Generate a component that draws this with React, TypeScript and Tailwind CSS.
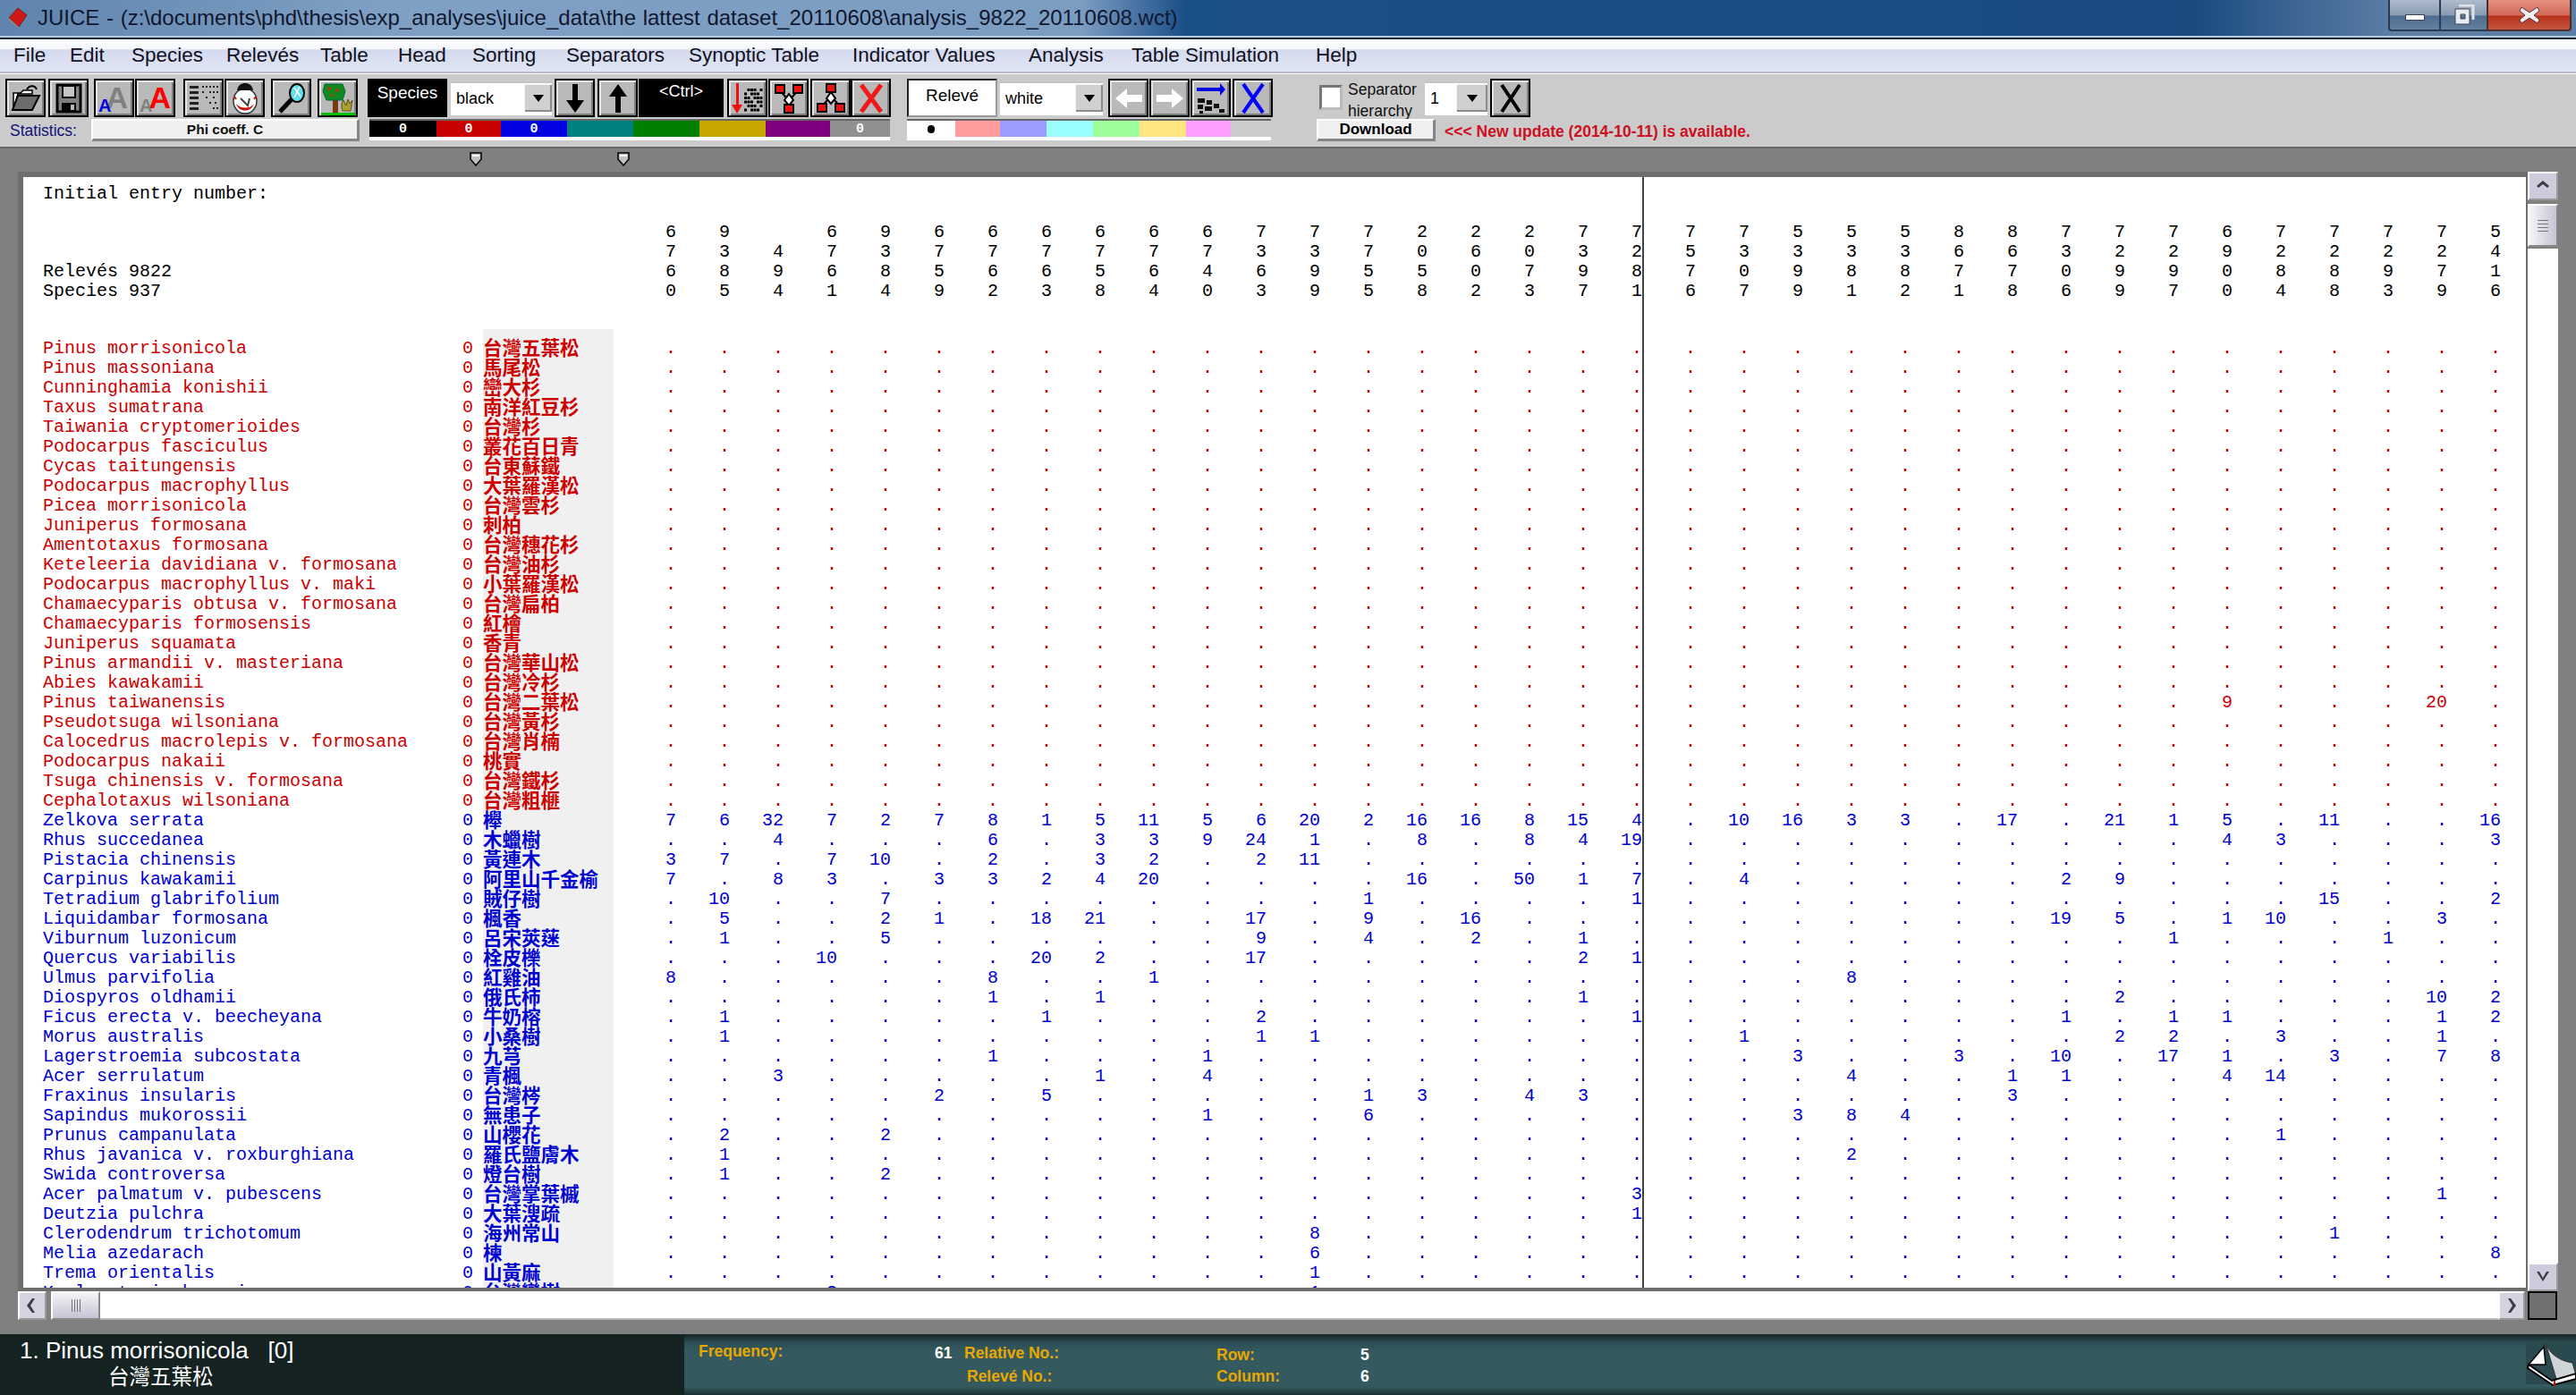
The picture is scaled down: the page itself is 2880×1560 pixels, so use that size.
const menus = [
  { label: "File", w: "w-[63px]" },
  { label: "Edit", w: "w-[69px]" },
  { label: "Species", w: "w-[106px]" },
  { label: "Relevés", w: "w-[105px]" },
  { label: "Table", w: "w-[87px]" },
  { label: "Head", w: "w-[83px]" },
  { label: "Sorting", w: "w-[105px]" },
  { label: "Separators", w: "w-[137px]" },
  { label: "Synoptic Table", w: "w-[183px]" },
  { label: "Indicator Values", w: "w-[197px]" },
  { label: "Analysis", w: "w-[115px]" },
  { label: "Table Simulation", w: "w-[206px]" },
  { label: "Help", w: "w-[60px]" },
];

const strip1 = [
  { w: "w-[75px]", bg: "bg-[#000000]", text: "0" },
  { w: "w-[72px]", bg: "bg-[#c80000]", text: "0" },
  { w: "w-[74px]", bg: "bg-[#0000e0]", text: "0" },
  { w: "w-[74px]", bg: "bg-[#008080]", text: "" },
  { w: "w-[74px]", bg: "bg-[#008000]", text: "" },
  { w: "w-[74px]", bg: "bg-[#c8a800]", text: "" },
  { w: "w-[72px]", bg: "bg-[#800080]", text: "" },
  { w: "w-[67px]", bg: "bg-[#909090]", text: "0" },
];

const strip2 = [
  { w: "w-[54px]", bg: "bg-[#ffffff]" },
  { w: "w-[50px]", bg: "bg-[#ff9c9c]" },
  { w: "w-[52px]", bg: "bg-[#9c9cff]" },
  { w: "w-[52px]", bg: "bg-[#9cffff]" },
  { w: "w-[52px]", bg: "bg-[#9cff9c]" },
  { w: "w-[52px]", bg: "bg-[#ffe680]" },
  { w: "w-[50px]", bg: "bg-[#ff9cff]" },
  { w: "w-[45px]", bg: "bg-[#cccccc]" },
];

const head = [
  "6 9 _ 6 9 6 6 6 6 6 6 7 7 7 2 2 2 7 7 7 7 5 5 5 8 8 7 7 7 6 7 7 7 7 5",
  "7 3 4 7 3 7 7 7 7 7 7 3 3 7 0 6 0 3 2 5 3 3 3 3 6 6 3 2 2 9 2 2 2 2 4",
  "6 8 9 6 8 5 6 6 5 6 4 6 9 5 5 0 7 9 8 7 0 9 8 8 7 7 0 9 9 0 8 8 9 7 1",
  "0 5 4 1 4 9 2 3 8 4 0 3 9 5 8 2 3 7 1 6 7 9 1 2 1 8 6 9 7 0 4 8 3 9 6",
];
const headLabels = ["", "", "Relevés 9822", "Species 937"];

// sparse rows: column index -> value, everything else is a dot
function sparse(vals: Record<number, string> = {}) {
  return Array.from({ length: 35 }, (_, i) => vals[i] ?? ".");
}
function dense(s: string) {
  return s.replace("|", "").trim().split(/\s+/);
}

const redRows: [string, string, string[]][] = [
  ["Pinus morrisonicola", "台灣五葉松", sparse()],
  ["Pinus massoniana", "馬尾松", sparse()],
  ["Cunninghamia konishii", "巒大杉", sparse()],
  ["Taxus sumatrana", "南洋紅豆杉", sparse()],
  ["Taiwania cryptomerioides", "台灣杉", sparse()],
  ["Podocarpus fasciculus", "叢花百日青", sparse()],
  ["Cycas taitungensis", "台東蘇鐵", sparse()],
  ["Podocarpus macrophyllus", "大葉羅漢松", sparse()],
  ["Picea morrisonicola", "台灣雲杉", sparse()],
  ["Juniperus formosana", "刺柏", sparse()],
  ["Amentotaxus formosana", "台灣穗花杉", sparse()],
  ["Keteleeria davidiana v. formosana", "台灣油杉", sparse()],
  ["Podocarpus macrophyllus v. maki", "小葉羅漢松", sparse()],
  ["Chamaecyparis obtusa v. formosana", "台灣扁柏", sparse()],
  ["Chamaecyparis formosensis", "紅檜", sparse()],
  ["Juniperus squamata", "香青", sparse()],
  ["Pinus armandii v. masteriana", "台灣華山松", sparse()],
  ["Abies kawakamii", "台灣冷杉", sparse()],
  ["Pinus taiwanensis", "台灣二葉松", sparse({ 29: "9", 33: "20" })],
  ["Pseudotsuga wilsoniana", "台灣黃杉", sparse()],
  ["Calocedrus macrolepis v. formosana", "台灣肖楠", sparse()],
  ["Podocarpus nakaii", "桃實", sparse()],
  ["Tsuga chinensis v. formosana", "台灣鐵杉", sparse()],
  ["Cephalotaxus wilsoniana", "台灣粗榧", sparse()],
];

const blueRows: [string, string, string[]][] = [
  ["Zelkova serrata", "櫸", dense("7 6 32 7 2 7 8 1 5 11 5 6 20 2 16 16 8 15 | 4 . 10 16 3 3 . 17 . 21 1 5 . 11 . . 16")],
  ["Rhus succedanea", "木蠟樹", dense(". . 4 . . . 6 . 3 3 9 24 1 . 8 . 8 4 | 19 . . . . . . . . . . 4 3 . . . 3")],
  ["Pistacia chinensis", "黃連木", sparse({ 0: "3", 1: "7", 3: "7", 4: "10", 6: "2", 8: "3", 9: "2", 11: "2", 12: "11" })],
  ["Carpinus kawakamii", "阿里山千金榆", dense("7 . 8 3 . 3 3 2 4 20 . . . . 16 . 50 1 | 7 . 4 . . . . . 2 9 . . . . . . .")],
  ["Tetradium glabrifolium", "賊仔樹", dense(". 10 . . 7 . . . . . . . . 1 . . . . | 1 . . . . . . . . . . . . 15 . . 2")],
  ["Liquidambar formosana", "楓香", dense(". 5 . . 2 1 . 18 21 . . 17 . 9 . 16 . . | . . . . . . . . 19 5 . 1 10 . . 3 .")],
  ["Viburnum luzonicum", "呂宋莢蒾", dense(". 1 . . 5 . . . . . . 9 . 4 . 2 . 1 | . . . . . . . . . . 1 . . . 1 . .")],
  ["Quercus variabilis", "栓皮櫟", sparse({ 3: "10", 7: "20", 8: "2", 11: "17", 17: "2", 18: "1" })],
  ["Ulmus parvifolia", "紅雞油", sparse({ 0: "8", 6: "8", 9: "1", 22: "8" })],
  ["Diospyros oldhamii", "俄氏柿", sparse({ 6: "1", 8: "1", 17: "1", 27: "2", 33: "10", 34: "2" })],
  ["Ficus erecta v. beecheyana", "牛奶榕", sparse({ 1: "1", 7: "1", 11: "2", 18: "1", 26: "1", 28: "1", 29: "1", 33: "1", 34: "2" })],
  ["Morus australis", "小桑樹", sparse({ 1: "1", 11: "1", 12: "1", 20: "1", 27: "2", 28: "2", 30: "3", 33: "1" })],
  ["Lagerstroemia subcostata", "九芎", sparse({ 6: "1", 10: "1", 21: "3", 24: "3", 26: "10", 28: "17", 29: "1", 31: "3", 33: "7", 34: "8" })],
  ["Acer serrulatum", "青楓", sparse({ 2: "3", 8: "1", 10: "4", 22: "4", 25: "1", 26: "1", 29: "4", 30: "14" })],
  ["Fraxinus insularis", "台灣梣", sparse({ 5: "2", 7: "5", 13: "1", 14: "3", 16: "4", 17: "3", 25: "3" })],
  ["Sapindus mukorossii", "無患子", sparse({ 10: "1", 13: "6", 21: "3", 22: "8", 23: "4" })],
  ["Prunus campanulata", "山櫻花", sparse({ 1: "2", 4: "2", 30: "1" })],
  ["Rhus javanica v. roxburghiana", "羅氏鹽膚木", sparse({ 1: "1", 22: "2" })],
  ["Swida controversa", "燈台樹", sparse({ 1: "1", 4: "2" })],
  ["Acer palmatum v. pubescens", "台灣掌葉槭", sparse({ 18: "3", 33: "1" })],
  ["Deutzia pulchra", "大葉溲疏", sparse({ 18: "1" })],
  ["Clerodendrum trichotomum", "海州常山", sparse({ 12: "8", 31: "1" })],
  ["Melia azedarach", "楝", sparse({ 12: "6", 34: "8" })],
  ["Trema orientalis", "山黃麻", sparse({ 12: "1" })],
  ["Koelreuteria henryi", "台灣欒樹", sparse({ 3: "3", 12: "1" })],
];

function Btn({ className = "", children }: { className?: string; children?: React.ReactNode }) {
  return (
    <div className={`w-[45px] h-[43px] shrink-0 flex items-center justify-center border-2 border-black bg-[#b9b9b9] shadow-[inset_2px_2px_0_#e4e4e4,inset_-2px_-2px_0_#7c7c7c] ${className}`}>
      {children}
    </div>
  );
}

function Select({ className = "", value, btn = "w-[31px]" }: { className?: string; value: string; btn?: string }) {
  return (
    <div className={`h-[43px] shrink-0 flex flex-col ${className}`}>
      <div className="h-[35px] mt-[3px] flex items-stretch bg-white border-t-[2px] border-[#c4c4c4]">
        <div className="flex-1 pl-[6px] text-[18px] leading-[34px] text-black">{value}</div>
        <div className={`${btn} my-[1px] flex items-center justify-center bg-[#d0d0d0] shadow-[inset_1px_1px_0_#f4f4f4,inset_-2px_-2px_0_#8c8c8c]`}>
          <svg width="12" height="8" viewBox="0 0 12 8"><path d="M0 0h12L6 8z" fill="#000" /></svg>
        </div>
      </div>
      <div className="h-[3px] bg-white" />
    </div>
  );
}

function Row({ name, cjk, cells, color }: { name: string; cjk: string; cells: string[]; color: string }) {
  return (
    <div className={`flex h-[22px] leading-[22px] ${color}`}>
      <div className="w-[491px] shrink-0 pl-[22px] whitespace-pre">{name}</div>
      <div className="w-[23px] shrink-0">0</div>
      <div className="w-[146px] shrink-0 bg-[#f0f0f0] font-['Liberation_Sans','Noto_Sans_CJK_TC',sans-serif] font-bold text-[21.5px] leading-[22px] whitespace-nowrap overflow-visible">{cjk}</div>
      <div className="ml-[10px] grid grid-cols-[repeat(35,60px)]">
        {cells.map((c, i) => (
          <div key={i} className="text-right">{c}</div>
        ))}
      </div>
    </div>
  );
}

function HeadRow({ label, cells }: { label: string; cells: string[] }) {
  return (
    <div className="flex h-[22px] leading-[22px] text-black">
      <div className="w-[670px] shrink-0 pl-[22px]">{label}</div>
      <div className="grid grid-cols-[repeat(35,60px)]">
        {cells.map((c, i) => (
          <div key={i} className="text-right">{c === "_" ? "" : c}</div>
        ))}
      </div>
    </div>
  );
}

function Marker({ className = "" }: { className?: string }) {
  return (
    <svg className={className} width="14" height="16" viewBox="0 0 14 16">
      <path d="M1 1h12v7l-6 7-6-7z" fill="#c0c0c0" stroke="#000" strokeWidth="1.5" />
      <path d="M3 3h8v2H3z" fill="#fff" />
    </svg>
  );
}

function Chevron({ dir }: { dir: "up" | "down" | "left" | "right" }) {
  const d = {
    up: "M2 9 9 3l7 6-2 2-5-4-5 4z",
    down: "M2 3h3l4 7 4-7h3L9 14z",
    left: "M9 1 3 9l6 8h3L7 9l5-8z",
    right: "M5 1h3l6 8-6 8H5l5-8z",
  }[dir];
  return (
    <svg width="18" height="18" viewBox="0 0 18 18"><path d={d} fill="#3c3c46" /></svg>
  );
}

function DotPattern() {
  const dots = [];
  for (let y = 0; y < 6; y++) for (let x = 0; x < 6; x++) if ((x * 3 + y * 5) % 4 !== 0) dots.push(<rect key={`${x}-${y}`} x={14 + x * 3.5} y={6 + y * 4.5} width="3" height="3" fill="#000" />);
  return <>{dots}</>;
}

export default function App() {
  return (
    <div className="w-[2880px] h-[1560px] flex flex-col overflow-hidden bg-[#808080] font-['Liberation_Sans','Noto_Sans_CJK_TC',sans-serif]">
      {/* title bar */}
      <div className="h-[40px] shrink-0 flex items-center bg-[linear-gradient(90deg,#5f84ad_0%,#7fa0c4_15%,#7c9dc2_42%,#1b4f88_46%,#1a4a80_85%,#5c7fa5_93%)]">
        <svg className="ml-[8px] shrink-0" width="24" height="24" viewBox="0 0 24 24">
          <path d="M2 12 12 1l10 8-9 13z" fill="#d01818" stroke="#6a2020" strokeWidth="1" />
          <path d="M2 12l11 10v2L2 15z" fill="#888" />
        </svg>
        <div className="ml-[10px] w-[1250px] shrink-0 text-[24px] leading-[40px] text-[#10172e] whitespace-nowrap [word-spacing:1px]">
          JUICE - (z:\documents\phd\thesis\exp_analyses\juice_data\the lattest dataset_20110608\analysis_9822_20110608.wct)
        </div>
        <div className="ml-auto mr-[5px] self-start flex h-[35px]">
          <div className="w-[57px] flex items-center justify-center border-l-2 border-b-2 border-[#2a3c55] rounded-bl-[4px] bg-[linear-gradient(180deg,#aebccd_0%,#8a9bb2_50%,#4f6d90_55%,#64809f_100%)]">
            <div className="w-[22px] h-[7px] mt-[6px] bg-white border border-[#445]" />
          </div>
          <div className="w-[53px] flex items-center justify-center border-l-2 border-b-2 border-[#2a3c55] bg-[linear-gradient(180deg,#aebccd_0%,#8a9bb2_50%,#4f6d90_55%,#64809f_100%)]">
            <svg width="24" height="24" viewBox="0 0 24 24" fill="none">
              <path d="M6 1h16v16" stroke="#dfe4ea" strokeWidth="3" />
              <path d="M2 5h16v17H2zM8 11h5v5H8z" fill="#e8ecf0" fillRule="evenodd" stroke="#445" strokeWidth="1" />
            </svg>
          </div>
          <div className="w-[95px] flex items-center justify-center border-l-2 border-r-2 border-b-2 border-[#4a3030] rounded-br-[4px] bg-[linear-gradient(180deg,#e5907e_0%,#d46a58_50%,#b8321a_55%,#c4573f_100%)]">
            <svg width="24" height="22" viewBox="0 0 24 22">
              <path d="M3 2l9 6 9-6 2 4-6 5 6 5-2 4-9-6-9 6-2-4 6-5-6-5z" fill="#f0f0f0" stroke="#534" strokeWidth="1" />
            </svg>
          </div>
        </div>
      </div>
      <div className="h-[2px] bg-[#b6c8da]" />
      <div className="h-[2px] bg-[#16293f]" />

      {/* menu bar */}
      <div className="h-[36px] shrink-0 flex items-center pl-[15px] text-[22.5px] text-[#111122] bg-[linear-gradient(180deg,#ffffff_0%,#f4f6fc_30%,#d4daee_33%,#e2e6f4_100%)]">
        {menus.map((m) => (
          <div key={m.label} className={`${m.w} shrink-0 whitespace-nowrap`}>{m.label}</div>
        ))}
      </div>
      <div className="h-[3px] bg-[#bcbccf] border-b border-white" />

      {/* toolbar */}
      <div className="h-[81px] shrink-0 bg-[#cbcbcb] pt-[5px]">
        <div className="flex h-[43px]">
          <Btn className="ml-[6px]">
            <svg width="34" height="32" viewBox="0 0 34 32">
              <path d="M3 10h8l3-3h10v4H8L3 28z" fill="#fff" stroke="#000" strokeWidth="1.5" />
              <path d="M8 13h24l-8 16H2z" fill="#6c6c6c" stroke="#000" strokeWidth="2" />
              <path d="M18 6c3-5 9-5 11 0" fill="none" stroke="#000" strokeWidth="2" />
            </svg>
          </Btn>
          <Btn className="ml-[3px]">
            <svg width="30" height="34" viewBox="0 0 30 34">
              <path d="M2 2h26v30H2z" fill="#808080" stroke="#000" strokeWidth="3" />
              <path d="M8 3h14v13H8z" fill="#c4c4c4" stroke="#000" strokeWidth="2" />
              <path d="M7 22h16v10H7z" fill="#000" />
              <path d="M17 24h4v6h-4z" fill="#bbb" />
            </svg>
          </Btn>
          <Btn className="ml-[6px] relative overflow-hidden">
            <span className="absolute right-[5px] top-[0px] text-[34px] font-bold leading-[38px] text-[#808080]">A</span>
            <span className="absolute left-[3px] bottom-[0px] text-[20px] font-bold leading-[22px] text-[#0000e0]">A</span>
          </Btn>
          <Btn className="ml-[1px] relative overflow-hidden">
            <span className="absolute right-[3px] top-[0px] text-[34px] font-bold leading-[38px] text-[#ff0000]">A</span>
            <span className="absolute left-[3px] bottom-[0px] text-[20px] font-bold leading-[22px] text-[#808080]">A</span>
          </Btn>
          <Btn className="ml-[9px]">
            <svg width="36" height="32" viewBox="0 0 36 32" fill="#222">
              <path d="M2 2h10v3H2zM2 8h10v3H2zM2 14h10v3H2zM2 20h10v3H2zM2 26h10v3H2z" />
              <path d="M16 2h2v2h-2zM20 2h2v2h-2zM24 2h2v2h-2zM28 2h2v2h-2zM32 2h2v2h-2zM16 8h2v2h-2zM24 8h2v2h-2zM28 8h2v2h-2zM32 8h2v2h-2zM20 14h2v2h-2zM28 14h2v2h-2zM24 20h2v2h-2zM30 20h2v2h-2zM28 26h2v2h-2zM32 26h2v2h-2z" />
            </svg>
          </Btn>
          <Btn className="ml-[1px]">
            <svg width="30" height="36" viewBox="0 0 30 36">
              <ellipse cx="15" cy="21" rx="13" ry="14" fill="#fff" stroke="#333" strokeWidth="1.5" />
              <path d="M6 9c1-6 5-8 9-8s8 2 9 8z" fill="#111" />
              <path d="M10 18l8 8 2-8" fill="none" stroke="#444" strokeWidth="2" />
              <path d="M5 24c3 10 17 10 20 0-4 6-15 6-20 0z" fill="#d01010" />
              <path d="M3 16l2 3M27 16l-2 3" stroke="#d01010" strokeWidth="2" />
            </svg>
          </Btn>
          <Btn className="ml-[7px]">
            <svg width="34" height="36" viewBox="0 0 34 36">
              <path d="M4 33l13-14" stroke="#000" strokeWidth="5" />
              <ellipse cx="23" cy="12" rx="8" ry="10" fill="#5fe0ee" stroke="#000" strokeWidth="2" />
              <path d="M20 6l7 10M26 5l-6 12" stroke="#fff" strokeWidth="1.5" />
            </svg>
          </Btn>
          <Btn className="ml-[7px]">
            <svg width="38" height="38" viewBox="0 0 38 38">
              <path d="M0 35h38v3H0z" fill="#00c000" />
              <path d="M13 14h6v21h-6z" fill="#7a3a10" />
              <path d="M4 3h20l3 8-3 10H6L2 11z" fill="#0f8a1e" stroke="#064" strokeWidth="1" />
              <path d="M7 6h4v4H7zM16 8h4v4h-4zM10 14h4v3h-4z" fill="#8a4a1a" />
              <path d="M24 33c-2-5-1-10 1-12l3 6 2-7 2 5 3-4-2 12z" fill="#a8a030" stroke="#5a5010" strokeWidth="1" />
            </svg>
          </Btn>

          <div className="ml-[11px] w-[89px] h-[43px] shrink-0 bg-black text-center text-white text-[19px] leading-[32px]">Species</div>
          <Select className="ml-[4px] w-[113px]" value="black" />
          <Btn className="ml-[3px]">
            <svg width="22" height="34" viewBox="0 0 22 34"><path d="M8 1h6v18h7L11 33 1 19h7z" fill="#000" /></svg>
          </Btn>
          <Btn className="ml-[3px]">
            <svg width="22" height="34" viewBox="0 0 22 34"><path d="M8 33h6V15h7L11 1 1 15h7z" fill="#000" /></svg>
          </Btn>
          <div className="ml-[1px] w-[95px] h-[43px] shrink-0 bg-black text-center text-white text-[18px] leading-[28px]">&lt;Ctrl&gt;</div>
          <Btn className="ml-[4px]">
            <svg width="36" height="34" viewBox="0 0 36 34">
              <path d="M5 0h3v24h4L6 34 0 24h5z" fill="#f01010" />
              <DotPattern />
            </svg>
          </Btn>
          <Btn className="ml-[1px]">
            <svg width="36" height="34" viewBox="0 0 36 34">
              <path d="M8 8l10 12L28 8M18 20v8" fill="none" stroke="#000" strokeWidth="2" />
              <path d="M18 12l5 7-5 6-5-6z" fill="#fff" stroke="#000" strokeWidth="2" />
              <path d="M3 2h10v9H3zM23 2h10v9H23zM13 24h10v9H13z" fill="#f01010" stroke="#000" strokeWidth="2" />
            </svg>
          </Btn>
          <Btn className="ml-[2px]">
            <svg width="36" height="34" viewBox="0 0 36 34">
              <path d="M8 26l10-12 10 12M18 14V6" fill="none" stroke="#000" strokeWidth="2" />
              <path d="M18 10l5 7-5 6-5-6z" fill="#fff" stroke="#000" strokeWidth="2" />
              <path d="M13 1h10v9H13zM3 23h10v9H3zM23 23h10v9H23z" fill="#f01010" stroke="#000" strokeWidth="2" />
            </svg>
          </Btn>
          <Btn>
            <svg width="30" height="34" viewBox="0 0 30 34"><path d="M4 2l22 30M26 2 4 32" stroke="#f01818" strokeWidth="5" fill="none" /></svg>
          </Btn>

          <div className="ml-[18px] w-[101px] h-[43px] shrink-0 bg-white border-2 border-[#222] border-r-[#999] border-b-[#999] text-center text-black text-[19px] leading-[34px]">Relevé</div>
          <Select className="ml-[3px] w-[115px]" value="white" />
          <Btn className="ml-[6px]">
            <svg width="32" height="22" viewBox="0 0 32 22"><path d="M31 7v8H14v7L1 11 14 0v7z" fill="#fff" /></svg>
          </Btn>
          <Btn className="ml-[1px]">
            <svg width="32" height="22" viewBox="0 0 32 22"><path d="M1 7v8h17v7l13-11L18 0v7z" fill="#fff" /></svg>
          </Btn>
          <Btn className="ml-[1px]">
            <svg width="34" height="36" viewBox="0 0 34 36">
              <path d="M1 6h26V1l6 7-6 7v-5H1z" fill="#0000e0" />
              <path d="M2 18h8v5H2zM12 20h6v5h-6zM20 24h6v5h-6zM2 25h6v5H2zM10 27h8v5h-8zM26 30h6v4h-6zM4 32h4v3H4z" fill="#111" />
            </svg>
          </Btn>
          <Btn className="ml-[2px]">
            <svg width="30" height="36" viewBox="0 0 30 36"><path d="M4 2l22 32M26 2 4 34" stroke="#0000ff" strokeWidth="4" fill="none" /></svg>
          </Btn>

          <div className="ml-[52px] w-[26px] h-[28px] mt-[7px] shrink-0 bg-white border-[3px] border-[#777] border-r-[#bbb] border-b-[#bbb]" />
          <div className="ml-[6px] w-[86px] shrink-0 text-[17.5px] leading-[24px] text-[#111] whitespace-nowrap">Separator<br />hierarchy</div>
          <Select className="w-[70px]" value="1" btn="w-[35px]" />
          <Btn className="ml-[3px]">
            <svg width="26" height="34" viewBox="0 0 26 34"><path d="M3 2l20 30M23 2 3 32" stroke="#000" strokeWidth="4" fill="none" /></svg>
          </Btn>
        </div>

        <div className="flex h-[27px] mt-[2px]">
          <div className="ml-[11px] w-[91px] shrink-0 text-[17.5px] leading-[26px] text-[#12127a]">Statistics:</div>
          <div className="w-[300px] h-[25px] shrink-0 bg-[#f0f0f0] border-t-2 border-l-2 border-white border-b-[3px] border-r-[3px] border-b-[#858585] border-r-[#858585] text-center text-[15.5px] font-bold leading-[20px] text-[#111]">Phi coeff. C</div>
          <div className="ml-[11px] w-[582px] h-[24px] shrink-0 flex flex-col">
            <div className="h-[2px] bg-[#666]" />
            <div className="flex h-[18px]">
              {strip1.map((s, i) => (
                <div key={i} className={`${s.w} ${s.bg} shrink-0 text-center text-white text-[15px] font-bold leading-[20px] font-['Liberation_Mono',monospace]`}>{s.text}</div>
              ))}
            </div>
            <div className="h-[4px] bg-white" />
          </div>
          <div className="ml-[19px] w-[407px] h-[24px] shrink-0 flex flex-col">
            <div className="h-[2px] bg-[#666]" />
            <div className="flex h-[18px]">
              {strip2.map((s, i) => (
                <div key={i} className={`${s.w} ${s.bg} shrink-0 flex items-center justify-center`}>
                  {i === 0 && <div className="w-[8px] h-[9px] rounded-full bg-black" />}
                </div>
              ))}
            </div>
            <div className="h-[4px] bg-white" />
          </div>
          <div className="ml-[51px] w-[133px] h-[25px] shrink-0 bg-[#f0f0f0] border-t-2 border-l-2 border-white border-b-[3px] border-r-[3px] border-b-[#858585] border-r-[#858585] text-center text-[17px] font-bold leading-[19px] text-black">Download</div>
          <div className="ml-[10px] text-[17.5px] font-bold leading-[28px] text-[#cc1020] whitespace-nowrap">&lt;&lt;&lt; New update (2014-10-11) is available.</div>
        </div>
      </div>
      <div className="h-[2px] bg-[#666]" />

      {/* marker band */}
      <div className="h-[26px] shrink-0 flex items-start pt-[4px]">
        <Marker className="ml-[525px]" />
        <Marker className="ml-[151px]" />
      </div>

      {/* table with vertical scrollbar */}
      <div className="flex h-[1252px] shrink-0">
        <div className="ml-[20px] w-[2806px] h-[1252px] shrink-0 border-t-[6px] border-l-[6px] border-r-[2px] border-b-[4px] border-[#6e6e6e] bg-white relative overflow-hidden font-['Liberation_Mono','Noto_Sans_CJK_TC',monospace] text-[20px]">
          <div className="h-[8px]" />
          <div className="h-[22px] leading-[22px] pl-[22px] text-black">Initial entry number:</div>
          <div className="h-[21px]" />
          {head.map((r, i) => (
            <HeadRow key={i} label={headLabels[i]} cells={r.split(" ")} />
          ))}
          <div className="h-[31px]" />
          <div className="flex h-[11px]">
            <div className="w-[514px] shrink-0" />
            <div className="w-[146px] shrink-0 bg-[#f0f0f0]" />
          </div>
          {redRows.map(([n, c, cells]) => (
            <Row key={n} name={n} cjk={c} cells={cells} color="text-[#cc0000]" />
          ))}
          {blueRows.map(([n, c, cells]) => (
            <Row key={n} name={n} cjk={c} cells={cells} color="text-[#0000d0]" />
          ))}
          <div className="absolute left-[1810px] top-0 bottom-0 w-[2px] bg-[#444]" />
        </div>
        <div className="w-[34px] shrink-0 flex flex-col">
          <div className="h-[32px] flex items-center justify-center bg-[#ccccdc] border-2 border-white border-r-[#999] border-b-[#999]"><Chevron dir="up" /></div>
          <div className="h-[48px] mt-[4px] flex flex-col items-center justify-center gap-[3px] bg-[linear-gradient(90deg,#f4f4f8,#c4c4d4)] border-2 border-white border-r-[#888] border-b-[#888]">
            <div className="w-[12px] h-[1px] bg-[#777]" />
            <div className="w-[12px] h-[1px] bg-[#777]" />
            <div className="w-[12px] h-[1px] bg-[#777]" />
            <div className="w-[12px] h-[1px] bg-[#777]" />
          </div>
          <div className="flex-1 bg-white mt-[2px]" />
          <div className="h-[32px] flex items-center justify-center bg-[#ccccdc] border-2 border-white border-r-[#999] border-b-[#999]"><Chevron dir="down" /></div>
        </div>
      </div>

      {/* horizontal scrollbar */}
      <div className="flex h-[32px] shrink-0 pl-[20px]">
        <div className="w-[32px] flex items-center justify-center bg-[#d4d4e0] border-2 border-white border-r-[#999] border-b-[#999]"><Chevron dir="left" /></div>
        <div className="w-[55px] ml-[5px] flex items-center justify-center gap-[2px] bg-[linear-gradient(180deg,#f4f4f8,#c4c4d4)] border-2 border-white border-r-[#888] border-b-[#888]">
          <div className="w-[1px] h-[14px] bg-[#777]" />
          <div className="w-[1px] h-[14px] bg-[#777]" />
          <div className="w-[1px] h-[14px] bg-[#777]" />
          <div className="w-[1px] h-[14px] bg-[#777]" />
        </div>
        <div className="w-[2681px] bg-white border-b-[2px] border-[#bbb]" />
        <div className="w-[30px] flex items-center justify-center bg-[#d4d4e0] border-2 border-white border-r-[#999] border-b-[#999]"><Chevron dir="right" /></div>
        <div className="w-[33px] ml-[3px] border-2 border-black bg-[#707070]" />
      </div>
      <div className="h-[16px] shrink-0" />

      {/* status bar */}
      <div className="flex-1 flex text-[17.5px]">
        <div className="w-[765px] shrink-0 bg-[#142222] pl-[22px] pt-[2px] text-white">
          <div className="text-[26px] leading-[32px] whitespace-pre">1. Pinus morrisonicola   [0]</div>
          <div className="pl-[99px] text-[23.5px] leading-[28px]">台灣五葉松</div>
        </div>
        <div className="flex-1 flex bg-[linear-gradient(180deg,#142222_0%,#2c4f55_14%,#345a60_30%,#345a60_86%,#1a3034_100%)] font-bold text-[#e8a800] relative">
          <div className="ml-[16px] w-[264px] shrink-0 pt-[6px]">Frequency:</div>
          <div className="w-[33px] shrink-0 pt-[8px] text-white">61</div>
          <div className="w-[282px] shrink-0 pt-[8px] leading-[26px]">
            <div>Relative No.:</div>
            <div className="ml-[3px]">Relevé No.:</div>
          </div>
          <div className="w-[161px] shrink-0 pt-[11px] leading-[24px]">
            <div>Row:</div>
            <div>Column:</div>
          </div>
          <div className="pt-[11px] leading-[24px] text-white">
            <div>5</div>
            <div>6</div>
          </div>
          <svg className="absolute right-0 top-[8px]" width="56" height="50" viewBox="0 0 56 50">
            <path d="M0 0h56v48H0z" fill="#2a4a50" />
            <path d="M3 26 20 6l2 20z" fill="#fff" stroke="#000" strokeWidth="1.5" />
            <path d="M22 2c4 12 16 20 30 22l4 14-22 4z" fill="#cfd4d8" stroke="#333" strokeWidth="1" />
            <path d="M3 26l26 18 27-8v6l-26 7L2 30z" fill="#fff" stroke="#000" strokeWidth="2" />
            <path d="M31 44h2v6h-2z" fill="#d01010" />
          </svg>
        </div>
      </div>
    </div>
  );
}
